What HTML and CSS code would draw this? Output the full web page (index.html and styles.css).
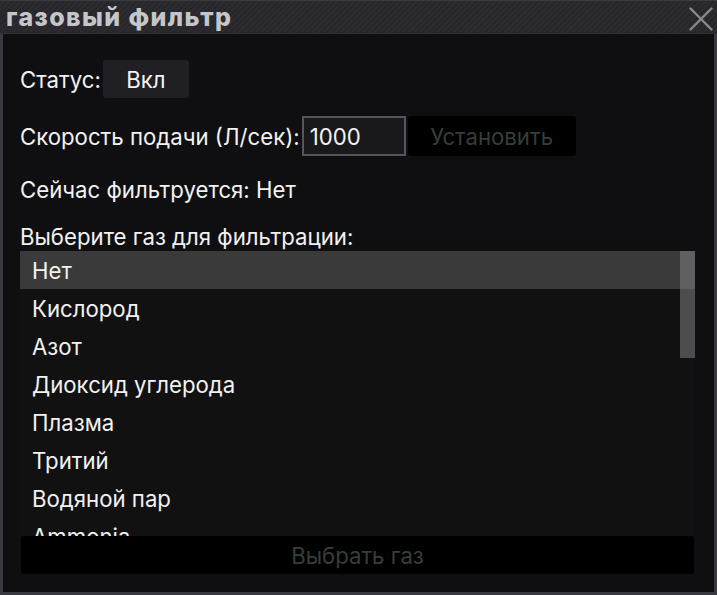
FILE: index.html
```html
<!DOCTYPE html>
<html lang="ru">
<head>
<meta charset="utf-8">
<title>газовый фильтр</title>
<link rel="stylesheet" href="styles.css">
</head>
<body>
<div class="window">
  <div class="titlebar">
    <span class="title">газовый фильтр</span>
    <svg class="close" width="24" height="24" viewBox="0 0 24 24" aria-hidden="true">
      <path d="M1.5 1.5 L22.5 22.5 M22.5 1.5 L1.5 22.5" stroke="#8a8a8c" stroke-width="2.4" stroke-linecap="round" fill="none"/>
    </svg>
  </div>
  <div class="content">
    <div class="row row-status">
      <span class="label">Статус:</span>
      <div class="btn btn-toggle">Вкл</div>
    </div>
    <div class="row row-rate">
      <span class="label">Скорость подачи (Л/сек):</span>
      <div class="input">1000</div>
      <div class="btn btn-disabled btn-set">Установить</div>
    </div>
    <div class="line line-current">Сейчас фильтруется: Нет</div>
    <div class="line line-choose">Выберите газ для фильтрации:</div>
    <div class="list">
      <div class="item selected">Нет</div>
      <div class="item">Кислород</div>
      <div class="item">Азот</div>
      <div class="item">Диоксид углерода</div>
      <div class="item">Плазма</div>
      <div class="item">Тритий</div>
      <div class="item">Водяной пар</div>
      <div class="item">Ammonia</div>
      <div class="scrollbar"></div>
    </div>
    <div class="btn btn-disabled btn-wide">Выбрать газ</div>
  </div>
</div>
</body>
</html>
```

FILE: styles.css
```css
* { box-sizing: border-box; }
html, body {
  margin: 0;
  padding: 0;
  background: #0f0f11;
}
body {
  width: 717px;
  height: 595px;
  overflow: hidden;
  font-family: Inter, "Noto Sans", "DejaVu Sans", sans-serif;
  color: #f2f2f2;
}
.window {
  width: 717px;
  height: 595px;
  display: flex;
  flex-direction: column;
}
.titlebar {
  height: 34px;
  flex: none;
  display: flex;
  align-items: center;
  justify-content: space-between;
  border-top: 1px solid #3b3b44;
  border-bottom: 1px solid #2e2e35;
  background: repeating-linear-gradient(135deg, #26262b 0 2px, #2b2b30 2px 4px);
  padding: 0 4px 0 6px;
}
.title {
  font-weight: 800;
  font-size: 25px;
  letter-spacing: 1.4px;
  line-height: 30px;
  color: #c6c6ca;
  margin-top: 0;
}
.close {
  margin-top: 3px;
}
.content {
  flex: 1;
  display: flex;
  flex-direction: column;
  border-left: 3px solid #393941;
  border-right: 3px solid #393941;
  border-bottom: 3px solid #393941;
  padding: 26px 19px 18px 17px;
  font-size: 22.2px;
}
.row {
  display: flex;
  align-items: center;
}
.row-status { height: 38px; }
.row-rate { height: 40px; margin-top: 18px; }
.label { margin-right: 2px; }
.btn {
  display: flex;
  align-items: center;
  justify-content: center;
  border-radius: 3px;
}
.btn-toggle {
  width: 86px;
  height: 38px;
  background: #1f1f24;
  color: #f4f4f4;
}
.input {
  width: 104px;
  height: 40px;
  border: 2px solid #56565e;
  background: #19191c;
  padding-left: 6px;
  display: flex;
  align-items: center;
  color: #f4f4f4;
}
.btn-disabled {
  background: #000000;
  color: #363e3a;
}
.btn-set {
  width: 168px;
  height: 40px;
  margin-left: 2px;
}
.line { display: flex; align-items: center; }
.line-current { height: 38px; margin-top: 14px; }
.line-choose { height: 30px; margin-top: 13px; }
.list {
  position: relative;
  height: 285px;
  overflow: hidden;
  background: #111111;
  flex: none;
}
.item {
  height: 38px;
  padding-left: 12px;
  display: flex;
  align-items: center;
}
.item.selected { background: #3a3a3a; }
.scrollbar {
  position: absolute;
  top: 0;
  right: 0;
  width: 15px;
  height: 107px;
  background: rgba(128, 128, 128, 0.55);
}
.btn-wide {
  height: 38px;
  margin-left: 1px;
  margin-right: 1px;
}
```
